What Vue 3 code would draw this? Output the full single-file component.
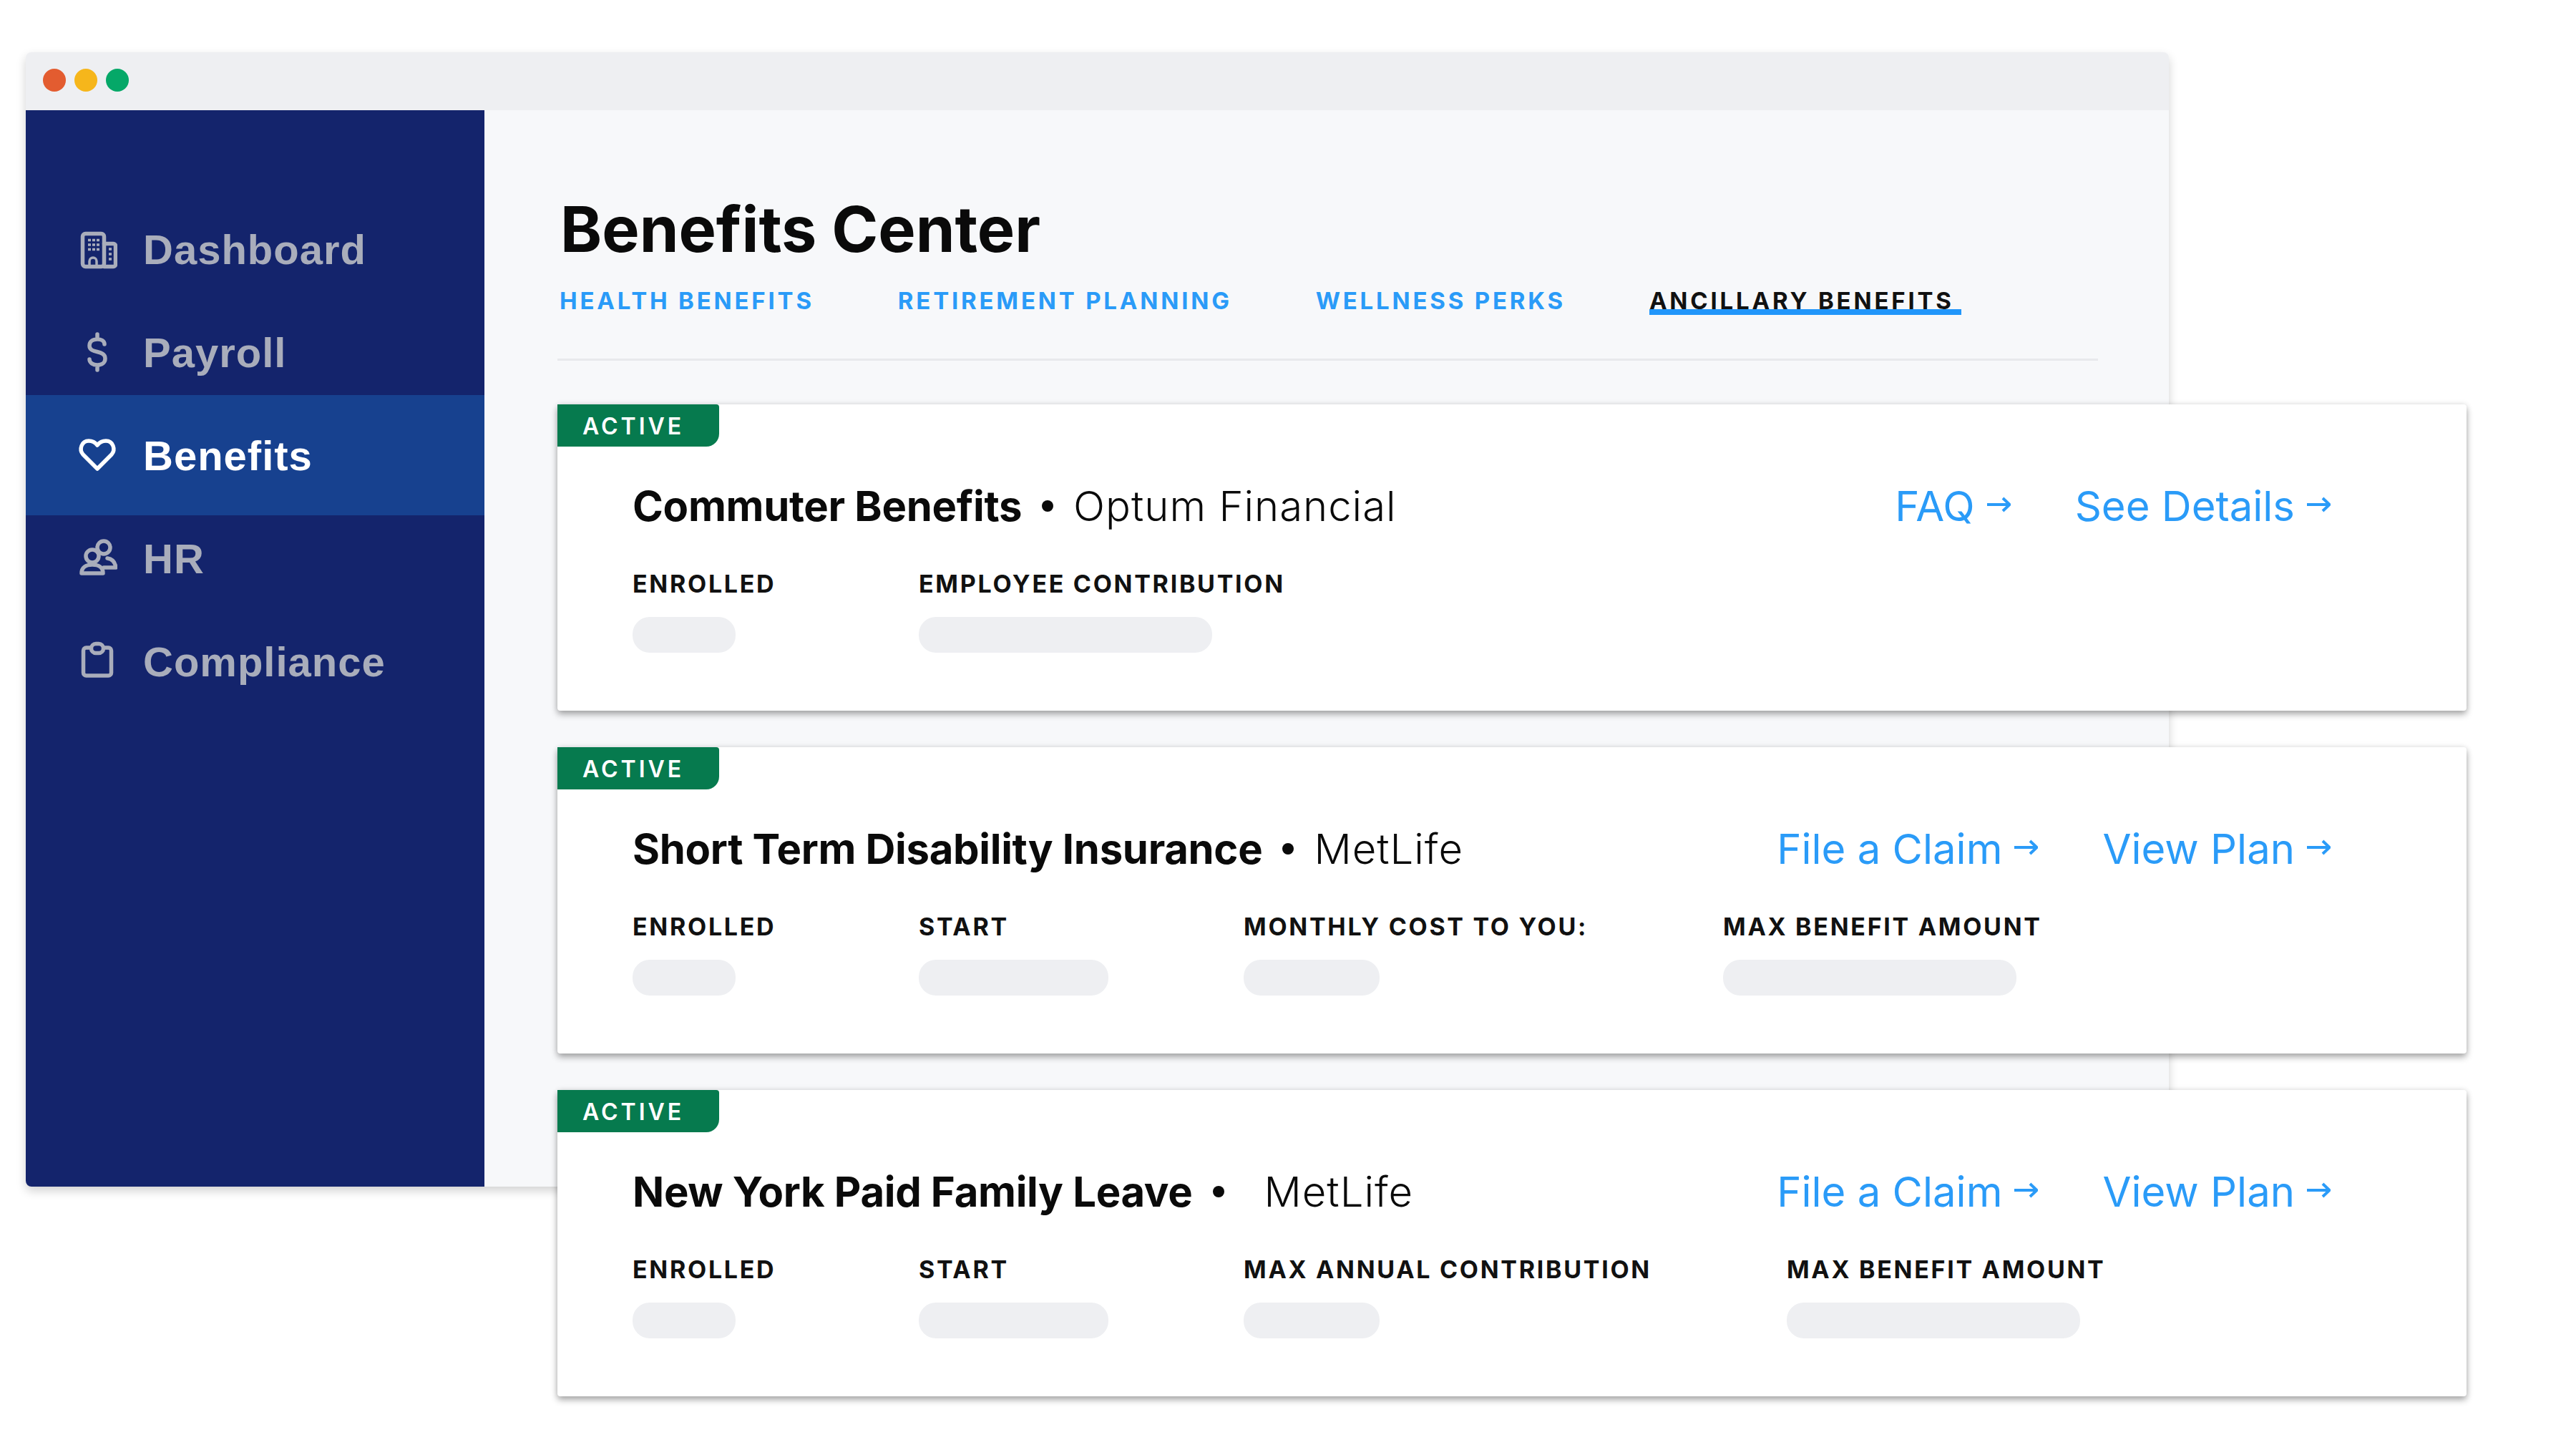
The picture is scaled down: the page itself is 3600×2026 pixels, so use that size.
<template>
  <div class="stage">
    <div class="window">
      <div class="titlebar">
        <span class="dot red"></span>
        <span class="dot yellow"></span>
        <span class="dot green"></span>
      </div>

      <div class="body">
        <!-- SIDEBAR -->
        <nav class="sidebar">
          <a class="nav-item">
            <svg class="nav-icon" viewBox="0 0 56 56">
              <rect x="7.5" y="6.5" width="30" height="46" rx="4" />
              <path d="M37.5 20.5h13a3 3 0 0 1 3 3v26a3 3 0 0 1-3 3h-13" />
              <path class="thin" d="M17 52v-7a5 5 0 0 1 10 0v7" />
              <path class="thin" d="M15 15.500h4M21 15.500h4M27 15.500h4M15 22h4M21 22h4M27 22h4M15 28.500h4M21 28.500h4M27 28.500h4M44 28h4M44 35h4M44 42h4" />
            </svg>
            Dashboard
          </a>
          <a class="nav-item">
            <svg class="nav-icon" viewBox="0 0 56 56">
              <path d="M38 17c0-5-5-7-10-7-6 0-11 3-11 9 0 12 22 5 22 18 0 6-5 9-11 9-6 0-11-3-11-8M28 3v7M28 46v7" />
            </svg>
            Payroll
          </a>
          <a class="nav-item active">
            <svg class="nav-icon" viewBox="0 0 56 56">
              <path d="M28 47 8 27C2 20 6 8 16 8c5 0 9 2 12 6 3-4 7-6 12-6 10 0 14 12 8 19Z" />
            </svg>
            Benefits
          </a>
          <a class="nav-item">
            <svg class="nav-icon" viewBox="0 0 56 56">
              <circle cx="37" cy="13" r="9" />
              <circle cx="21" cy="25" r="9" />
              <path d="M6 49c0-8 6-12 15-12s15 4 15 12Z" />
              <path d="M42 28c7 1 11 6 12 13H37" />
            </svg>
            HR
          </a>
          <a class="nav-item">
            <svg class="nav-icon" viewBox="0 0 56 56">
              <rect x="8.500" y="9" width="39" height="39" rx="4" />
              <rect class="clip" x="19.500" y="3.500" width="17" height="13" rx="6.500" />
            </svg>
            Compliance
          </a>
        </nav>

        <!-- MAIN -->
        <main class="main">
          <h1 class="page-title">Benefits Center</h1>
          <div class="tabs">
            <a v-for="tab in tabs" :key="tab.label" class="tab" :class="{ current: tab.current }">{{ tab.label }}</a>
          </div>

          <section v-for="card in cards" :key="card.name" class="card">
            <span class="badge">ACTIVE</span>
            <div class="card-head">
              <div class="card-title">
                <strong>{{ card.name }}</strong>
                <i class="sep"></i>
                <span class="provider" :class="{ wide: card.wide }">{{ card.provider }}</span>
              </div>
              <div class="links">
                <a v-for="link in card.links" :key="link" class="link">
                  {{ link }}
                  <svg class="arrow" viewBox="0 0 34 24">
                    <path d="M1 12h31M23 3l9.500 9-9.500 9" />
                  </svg>
                </a>
              </div>
            </div>
            <div class="fields">
              <div v-for="field in card.fields" :key="field.label" class="field">
                <div class="field-label">{{ field.label }}</div>
                <div class="pill" :style="{ width: field.width + 'px' }"></div>
              </div>
            </div>
          </section>
        </main>
      </div>
    </div>
  </div>
</template>

<script setup>
const tabs = [
  { label: 'HEALTH BENEFITS' },
  { label: 'RETIREMENT PLANNING' },
  { label: 'WELLNESS PERKS' },
  { label: 'ANCILLARY BENEFITS', current: true }
]

const cards = [
  {
    name: 'Commuter Benefits',
    provider: 'Optum Financial',
    links: ['FAQ', 'See Details'],
    fields: [
      { label: 'ENROLLED', width: 144 },
      { label: 'EMPLOYEE CONTRIBUTION', width: 410 }
    ]
  },
  {
    name: 'Short Term Disability Insurance',
    provider: 'MetLife',
    links: ['File a Claim', 'View Plan'],
    fields: [
      { label: 'ENROLLED', width: 144 },
      { label: 'START', width: 265 },
      { label: 'MONTHLY COST TO YOU:', width: 190 },
      { label: 'MAX BENEFIT AMOUNT', width: 410 }
    ]
  },
  {
    name: 'New York Paid Family Leave',
    provider: 'MetLife',
    wide: true,
    links: ['File a Claim', 'View Plan'],
    fields: [
      { label: 'ENROLLED', width: 144 },
      { label: 'START', width: 265 },
      { label: 'MAX ANNUAL CONTRIBUTION', width: 190 },
      { label: 'MAX BENEFIT AMOUNT', width: 410 }
    ]
  }
]
</script>

<style>
html, body {
  margin: 0;
  background: #fff;
}
</style>

<style scoped>
.stage {
  width: 3600px;
  height: 2026px;
  padding: 73px 0 0 36px;
  box-sizing: border-box;
  background: #fff;
  overflow: hidden;
  font-family: "Inter", "Liberation Sans", sans-serif;
}

.window {
  width: 2995px;
  height: 1585px;
  display: flex;
  flex-direction: column;
  border-radius: 8px;
  background: #f7f8fa;
  box-shadow: 0 6px 14px rgba(0, 0, 0, 0.18);
}

.titlebar {
  height: 81px;
  flex: none;
  display: flex;
  align-items: center;
  gap: 12px;
  padding: 0 0 4px 24px;
  box-sizing: border-box;
  background: #eeeff2;
  border-radius: 8px 8px 0 0;
}

.dot {
  width: 32px;
  height: 32px;
  border-radius: 50%;
}
.red { background: #e35c30; }
.yellow { background: #f6b61b; }
.green { background: #05a868; }

.body {
  flex: 1;
  display: flex;
  min-height: 0;
}

/* SIDEBAR */
.sidebar {
  width: 641px;
  flex: none;
  padding-top: 122px;
  box-sizing: border-box;
  background: #14246c;
  border-radius: 0 0 0 8px;
}

.nav-item {
  height: 144px;
  display: flex;
  align-items: center;
  gap: 36px;
  padding-left: 72px;
  font-family: "Liberation Sans", sans-serif;
  font-size: 58px;
  font-weight: 700;
  letter-spacing: 1px;
  color: #a9adbb;
}

.nav-item.active {
  height: 168px;
  margin: -12px 0;
  background: #17418f;
  color: #fff;
}

.nav-icon {
  width: 56px;
  height: 56px;
  flex: none;
  fill: none;
  stroke: currentColor;
  stroke-width: 5.5;
  stroke-linecap: round;
  stroke-linejoin: round;
}
.nav-icon .thin { stroke-width: 3.5; stroke-linecap: butt; }
.nav-icon .clip { fill: #14246c; }

/* MAIN */
.main {
  flex: 1;
  min-width: 0;
  padding: 0 99px 0 102px;
}

.page-title {
  margin: 114px 0 0 4px;
  font-size: 88px;
  line-height: 104px;
  font-weight: 700;
  color: #0a0a0a;
}

.tabs {
  display: flex;
  gap: 117px;
  height: 106px;
  margin-top: 23px;
  margin-bottom: 61px;
  padding-left: 3px;
  border-bottom: 3px solid #e8e9ec;
}

.tab {
  font-size: 33px;
  line-height: 50px;
  font-weight: 700;
  letter-spacing: 3.8px;
  color: #2a9bf8;
}

.tab.current {
  height: 37px;
  color: #111;
  border-bottom: 8px solid #2196fa;
  padding-right: 10px;
}

/* CARDS */
.card {
  position: relative;
  width: 2668px;
  height: 428px;
  margin-bottom: 51px;
  padding: 100px 190px 0 105px;
  box-sizing: border-box;
  background: #fff;
  border-radius: 4px;
  box-shadow: 0 5px 10px rgba(0, 0, 0, 0.32), 0 0 8px rgba(0, 0, 0, 0.1);
}

.badge {
  position: absolute;
  top: 0;
  left: 0;
  width: 226px;
  height: 59px;
  padding-left: 35px;
  box-sizing: border-box;
  background: #067a4e;
  border-radius: 0 4px 18px 0;
  font-size: 32px;
  line-height: 61px;
  font-weight: 600;
  letter-spacing: 4px;
  color: #fff;
}

.card-head {
  display: flex;
  justify-content: space-between;
  align-items: center;
  height: 84px;
}

.card-title {
  display: flex;
  align-items: center;
  font-size: 58px;
  line-height: 84px;
  color: #0a0a0a;
}

.card-title strong {
  font-weight: 700;
  letter-spacing: -0.3px;
}

.sep {
  width: 16px;
  height: 16px;
  margin: 0 28px;
  border-radius: 50%;
  background: #0a0a0a;
}

.provider {
  font-weight: 300;
  letter-spacing: 1px;
}
.provider.wide {
  margin-left: 28px;
}

.links {
  display: flex;
  gap: 90px;
}

.link {
  display: flex;
  align-items: center;
  gap: 16px;
  font-size: 58px;
  line-height: 84px;
  font-weight: 400;
  color: #2a9bf8;
}

.arrow {
  width: 34px;
  height: 24px;
  margin-top: -4px;
  fill: none;
  stroke: currentColor;
  stroke-width: 4;
}

.fields {
  display: flex;
  gap: 189px;
  margin-top: 45px;
}

.field:first-child {
  min-width: 211px;
}

.field-label {
  font-size: 34px;
  line-height: 44px;
  font-weight: 700;
  letter-spacing: 2.7px;
  color: #111;
  white-space: nowrap;
}

.pill {
  height: 50px;
  margin-top: 24px;
  border-radius: 24px;
  background: #eeeff2;
}
</style>
